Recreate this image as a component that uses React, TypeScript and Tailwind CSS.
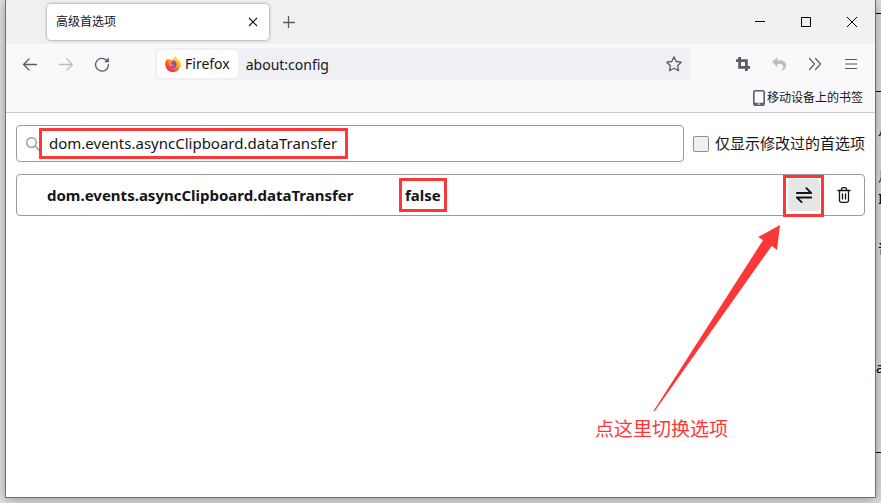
// App.tsx
import type { ReactNode } from "react";

// 首选项数据
const prefs = [{ name: "dom.events.asyncClipboard.dataTransfer", value: "false" }];

function ToolButton({ label, children }: { label: string; children: ReactNode }) {
  return (
    <button type="button" aria-label={label} className="flex h-8 w-9 shrink-0 items-center justify-center text-[#5b5b66]">
      {children}
    </button>
  );
}

function FirefoxLogo() {
  return (
    <svg width="16" height="16" viewBox="0 0 16 16" aria-hidden="true" className="shrink-0">
      <defs>
        <linearGradient id="fx-body" x1="0.85" y1="0.1" x2="0.2" y2="0.95">
          <stop offset="0" stopColor="#fff44f" />
          <stop offset="0.35" stopColor="#ffb01f" />
          <stop offset="0.6" stopColor="#ff6a30" />
          <stop offset="0.85" stopColor="#ff3150" />
          <stop offset="1" stopColor="#e31587" />
        </linearGradient>
        <linearGradient id="fx-globe" x1="0.7" y1="0" x2="0.3" y2="1">
          <stop offset="0" stopColor="#a64bf0" />
          <stop offset="1" stopColor="#5a3fd0" />
        </linearGradient>
      </defs>
      <path
        d="M15.2 5.6c-.4-.9-1-1.700-1.700-2.100.3.6.4 1 .5 1.500C13.100 2.900 11 2 10.600 0c-1.300.8-1.900 2.200-2 3.200-.9 0-1.700.3-2.400.7C5 3.700 4.400 3 4.200 2.400 3.500 2.900 3.300 3.700 3.200 4c-.6-.3-.9-1.200-.9-1.800C1 3.600.1 5.900.1 8.200a7.900 7.900 0 0 0 15.800.1c0-.9-.2-1.900-.7-2.700Z"
        fill="url(#fx-body)"
      />
      <circle cx="8.100" cy="8" r="3.400" fill="url(#fx-globe)" />
      <path d="M3.200 5.200c1-.9 2.300-.8 3.100-.2.500.2 1.200.2 1.600.3 0 .7-.7 1-1.300 1.200-.5.300-.5.700-.3 1.300.5 1.200 2.200 1.200 3.300.500-.5 1.600-2.200 2.300-3.800 1.900C3.700 9.500 2.700 7.500 3.200 5.200Z" fill="#ff980e" />
    </svg>
  );
}

// 标题栏与标签页
function TabStrip() {
  return (
    <header className="flex h-11 shrink-0 items-start justify-between bg-[#f0f0f0]">
      <div className="flex items-center pl-[41px]">
        <div className="mt-1 flex h-9 w-[222px] items-center justify-between rounded bg-white pr-2 pl-[9px] text-xs text-[#15141a] shadow-[0_0_3px_rgba(80,80,90,0.7)]">
          <span>高级首选项</span>
          <button type="button" aria-label="关闭标签页" className="flex size-4 items-center justify-center">
            <svg width="10" height="10" viewBox="0 0 10 10" fill="none" stroke="currentColor" strokeWidth="1.100">
              <path d="m1 1 8 8M9 1 1 9" />
            </svg>
          </button>
        </div>
        <button type="button" aria-label="打开新标签页" className="mt-1 ml-1 flex h-9 w-8 items-center justify-center text-[#5b5b66]">
          <svg width="12" height="12" viewBox="0 0 12 12" fill="none" stroke="currentColor" strokeWidth="1.300">
            <path d="M5.500 0v12M0 6.500h12" />
          </svg>
        </button>
      </div>
      <div className="flex text-black">
        <button type="button" aria-label="最小化" className="flex h-11 w-[46px] items-center justify-center">
          <svg width="10" height="10" viewBox="0 0 10 10" stroke="currentColor"><path d="M0 4.500h10" /></svg>
        </button>
        <button type="button" aria-label="最大化" className="flex h-11 w-[46px] items-center justify-center">
          <svg width="10" height="10" viewBox="0 0 10 10" fill="none" stroke="currentColor"><path d="M.5.5h9v9h-9z" /></svg>
        </button>
        <button type="button" aria-label="关闭" className="flex h-11 w-[46px] items-center justify-center">
          <svg width="10" height="10" viewBox="0 0 10 10" fill="none" stroke="currentColor"><path d="m0 0 10 10M10 0 0 10" /></svg>
        </button>
      </div>
    </header>
  );
}

// 导航工具栏
function NavBar() {
  return (
    <nav className="flex h-10 items-center px-[6px]">
      <ToolButton label="后退">
        <svg width="16" height="16" viewBox="0 0 16 16" fill="none" stroke="currentColor" strokeWidth="1.300" strokeLinecap="round" strokeLinejoin="round">
          <path d="M14.500 8.500h-13M7 3 1.500 8.500 7 14" />
        </svg>
      </ToolButton>
      <ToolButton label="前进">
        <svg width="16" height="16" viewBox="0 0 16 16" fill="none" stroke="#bdbdc2" strokeWidth="1.300" strokeLinecap="round" strokeLinejoin="round">
          <path d="M1.500 8.500h13M9 3l5.500 5.500L9 14" />
        </svg>
      </ToolButton>
      <ToolButton label="刷新">
        <svg width="16" height="16" viewBox="0 0 16 16" fill="none" stroke="currentColor" strokeWidth="1.300" strokeLinecap="round">
          <path d="M14.400 8.500A6.400 6.400 0 1 1 12.300 4" />
          <path d="M14.900 1.500v4.800h-4.800z" fill="currentColor" stroke="none" />
        </svg>
      </ToolButton>

      <div className="mx-[35px] flex h-8 min-w-0 flex-1 items-center rounded bg-[#f0f0f4] pl-[2px] text-sm text-[#15141a]">
        <div className="flex h-7 items-center gap-1 rounded bg-white px-2">
          <FirefoxLogo />
          <span>Firefox</span>
        </div>
        <input aria-label="地址栏" defaultValue="about:config" className="h-7 min-w-0 flex-1 bg-transparent pl-2 outline-none" />
        <button type="button" aria-label="添加书签" className="flex h-8 w-8 items-center justify-center text-[#5b5b66]">
          <svg width="16" height="16" viewBox="0 0 16 16" fill="none" stroke="currentColor" strokeWidth="1.300" strokeLinejoin="round">
            <path d="m8 .9 2.200 4.600 5 .7-3.600 3.500.9 5L8 12.300l-4.500 2.400.9-5L.8 6.200l5-.7z" />
          </svg>
        </button>
      </div>

      <ToolButton label="截图">
        <svg width="14" height="14" viewBox="0 0 14 14" fill="none" stroke="currentColor" strokeWidth="2.800">
          <path d="M3.600 0v10.400H14M0 3.600h10.400V14" />
        </svg>
      </ToolButton>
      <ToolButton label="撤销">
        <svg width="14" height="14" viewBox="0 0 14 14" fill="#bdbdc2">
          <path d="M0 5 5.400 0v3.200h3C11.800 3.200 14 5.500 14 8.500c0 2.900-2 5-5 5.500 1.700-1.300 2.200-2.500 2.200-4 0-2-1.200-3-3.300-3H5.400v3.200z" />
        </svg>
      </ToolButton>
      <ToolButton label="更多工具">
        <svg width="14" height="14" viewBox="0 0 14 14" fill="none" stroke="currentColor" strokeWidth="1.200" strokeLinecap="round" strokeLinejoin="round">
          <path d="m1.500 1.500 5 5.500-5 5.500M7.500 1.500l5 5.500-5 5.500" />
        </svg>
      </ToolButton>
      <ToolButton label="应用程序菜单">
        <svg width="12" height="12" viewBox="0 0 12 12" fill="none" stroke="currentColor" strokeWidth="1.200">
          <path d="M0 1.500h12M0 6h12M0 10.500h12" />
        </svg>
      </ToolButton>
    </nav>
  );
}

// 书签栏
function BookmarkBar() {
  return (
    <div className="flex h-7 items-center justify-end pr-3 text-xs text-[#15141a]">
      <button type="button" className="flex items-center gap-[2px]">
        <svg width="12" height="16" viewBox="0 0 12 16" fill="none" stroke="#5b5b66" strokeWidth="1.600">
          <rect x="0.800" y="0.800" width="10.400" height="14.400" rx="1.500" />
          <path d="M1 13.800h10" strokeWidth="2" />
          <path d="M4.800 14h2.400" stroke="#fff" strokeWidth="1" />
        </svg>
        <span>移动设备上的书签</span>
      </button>
    </div>
  );
}

function PrefTable() {
  return (
    <div className="mt-3 rounded border border-[#9a9a9f]">
      <table className="w-full border-collapse text-[15px] font-bold text-[#15141a]">
        <tbody>
          {prefs.map((pref) => (
            <tr key={pref.name} className="h-10">
              <th scope="row" className="w-[388px] p-0 pl-[30px] text-left">{pref.name}</th>
              <td className="p-0">
                <span className="relative inline-block">
                  {pref.value}
                  <i className="absolute -inset-x-[6px] -inset-y-[6px] border-3 border-[#fb3838]" />
                </span>
              </td>
              <td className="p-0 pr-1">
                <div className="flex justify-end gap-2">
                  <button type="button" aria-label="切换" className="relative flex size-8 items-center justify-center rounded bg-[#e6e6e6]">
                    <svg width="16" height="16" viewBox="0 0 16 16" fill="none" stroke="currentColor" strokeWidth="1.900" strokeLinecap="round" strokeLinejoin="round">
                      <path d="M.9 6h14.200L10.400 1.200M15.100 10.500H.9l4.700 4.600" />
                    </svg>
                    <i className="absolute -top-1 -right-1 -bottom-[6px] -left-[5px] border-3 border-[#fb3838]" />
                  </button>
                  <button type="button" aria-label="删除" className="flex size-8 items-center justify-center">
                    <svg width="14" height="16" viewBox="0 0 14 16" fill="none" stroke="currentColor" strokeWidth="1.300" strokeLinecap="round" strokeLinejoin="round">
                      <path d="M1 3.500h12M4.500 3.300V2.200C4.500 1.200 5 .7 6 .7h2c1 0 1.500.5 1.500 1.500v1.100M2.500 3.700v9.800c0 1.200.6 1.800 1.800 1.800h5.400c1.200 0 1.800-.6 1.800-1.800V3.700M5.500 7v5M8.500 7v5" />
                    </svg>
                  </button>
                </div>
              </td>
            </tr>
          ))}
        </tbody>
      </table>
    </div>
  );
}

export default function App() {
  return (
    <div className="flex h-screen overflow-hidden bg-[#e4e4e4] pl-[5px] font-['Noto_Sans','Noto_Sans_CJK_SC',sans-serif]">
      <div className="relative z-10 mb-[5px] flex min-w-0 flex-1 flex-col border border-t-0 border-[#6e6e70] bg-white shadow-[0_2px_12px_rgba(0,0,0,0.35)]">
        <TabStrip />
        <div className="border-b border-[#cccccc] bg-[#f9f9fb]">
          <NavBar />
          <BookmarkBar />
        </div>

        <main className="relative flex-1 px-[10px] pt-3">
          <div className="flex items-center gap-[9px]">
            <div className="relative flex h-[37px] min-w-0 flex-1 items-center rounded border border-[#9a9a9f] pl-2">
              <svg width="16" height="16" viewBox="0 0 16 16" fill="none" stroke="#9a9a9f" strokeWidth="1.400" className="shrink-0">
                <circle cx="6.500" cy="6.500" r="4.800" />
                <path d="m10 10 5 5" />
              </svg>
              <input
                aria-label="搜索首选项名称"
                defaultValue="dom.events.asyncClipboard.dataTransfer"
                className="h-8 min-w-0 flex-1 bg-transparent pb-px pl-2 text-[15px] text-[#15141a] outline-none"
              />
              <i className="pointer-events-none absolute top-[2px] left-[22px] h-[31px] w-[309px] border-3 border-[#fb3838]" />
            </div>
            <label className="flex items-center gap-[6px] text-[15px] text-[#15141a]">
              <input type="checkbox" className="size-4 appearance-none rounded-xs border border-[#8f8f9d] bg-[#f0f0f4]" />
              仅显示修改过的首选项
            </label>
          </div>

          <PrefTable />

          {/* 箭头标注 */}
          <svg width="128" height="188" viewBox="0 0 128 188" fill="#fb3838" className="absolute top-[111px] right-[94px]">
            <path d="M127 1 105.300 13 110 16.200.5 187l1 .5L118.700 22l5.300 4z" />
          </svg>
          <p className="absolute top-[302px] right-[147px] text-[19px] leading-7 text-[#fb3838]">点这里切换选项</p>
        </main>
      </div>

      {/* 后方页面露出的一条边 */}
      <aside aria-hidden="true" className="relative w-[5px] shrink-0 overflow-hidden bg-[#dedede] text-[14px] leading-5 text-black">
        <i className="absolute top-[13px] left-0 h-px w-full bg-black" />
        <i className="absolute top-[91px] left-0 h-px w-full bg-black" />
        <i className="absolute top-[452px] left-0 h-px w-full bg-black" />
        <span className="absolute top-[120px] left-[2px]">从</span>
        <span className="absolute top-[166px] left-[2px] text-[#80004a]">月</span>
        <span className="absolute top-[189px] left-[2px]">I</span>
        <span className="absolute top-[238px] left-[2px]">普</span>
        <span className="absolute top-[358px] left-0">a</span>
      </aside>
    </div>
  );
}
